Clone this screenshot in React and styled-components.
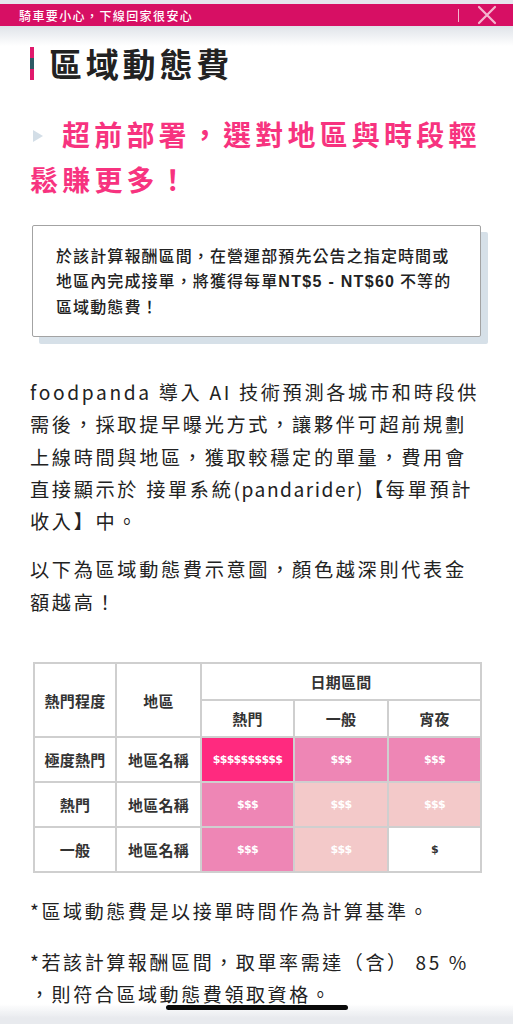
import React from 'react';
import styled, { createGlobalStyle } from 'styled-components';

const GlobalStyle = createGlobalStyle`
  html, body {
    margin: 0;
    padding: 0;
    background: #ffffff;
    overflow-x: hidden;
  }
  body {
    font-family: "Noto Sans CJK TC", "Noto Sans", sans-serif;
    color: #222222;
  }
`;

const Page = styled.div`
  width: 513px;
  padding-top: 4px;
  background: linear-gradient(#e6e6ee 0, #e6e6ee 4px, #ffffff 4px);
`;

const Banner = styled.div`
  height: 22px;
  background: #d70f64;
  display: flex;
  align-items: center;
  padding: 0 16px 0 19px;
`;

const BannerText = styled.span`
  flex: 1;
  color: #ffffff;
  font-size: 12px;
  font-weight: 500;
  letter-spacing: 1.4px;
`;

const Divider = styled.span`
  width: 1.5px;
  height: 13px;
  background: #f4b6cf;
  margin-right: 18px;
`;

const CloseButton = styled.button`
  border: 0;
  padding: 0;
  background: none;
  display: flex;
  align-items: center;
`;

const Content = styled.main`
  padding: 20px 28px 0 30px;
  background: linear-gradient(#dfe3e9, #ffffff 20px);
`;

const TitleRow = styled.h1`
  display: flex;
  align-items: center;
  margin: 0;
  font-size: 33px;
  font-weight: 700;
  letter-spacing: 3.8px;
  line-height: 34px;
  color: #222222;
`;

const TitleMark = styled.span`
  width: 4px;
  height: 33px;
  margin-right: 15px;
  background: linear-gradient(
    #e0196c 0 33%,
    #2d5964 33% 66%,
    #e0196c 66% 100%
  );
`;

const Headline = styled.h2`
  margin: 32px 0 0 0;
  font-size: 28px;
  font-weight: 700;
  letter-spacing: 4.2px;
  line-height: 45px;
  color: #f7337f;
`;

const Triangle = styled.span`
  display: inline-block;
  width: 0;
  height: 0;
  border-top: 6px solid transparent;
  border-bottom: 6px solid transparent;
  border-left: 10px solid #d3dee7;
  margin: 0 19px 0 3px;
  vertical-align: 4px;
`;

const Callout = styled.div`
  margin: 23px 4px 0 2px;
  padding: 17px 16px 17px 23px;
  border: 1.5px solid #a3a3a3;
  border-radius: 2px;
  background: #ffffff;
  box-shadow: 7px 7px 0 #d6e0e8;
  font-size: 16px;
  font-weight: 500;
  letter-spacing: 1.1px;
  line-height: 25px;
  color: #222222;
`;

const Strong = styled.b`
  font-family: "Liberation Sans", "Noto Sans", sans-serif;
  font-weight: 700;
  letter-spacing: 1.3px;
`;

const Paragraph = styled.p`
  max-width: 454px;
  margin: ${(p) => p.$top || 16}px 0 0 0;
  font-size: 19.2px;
  font-weight: 400;
  letter-spacing: 2.65px;
  line-height: 32.3px;
  color: #222222;
`;

const Latin = styled.span`
  letter-spacing: 1.5px;
`;

const Table = styled.table`
  margin: 44px 0 0 3px;
  width: 447px;
  border-collapse: collapse;
  table-layout: fixed;
  font-size: 15px;
  font-weight: 700;
  color: #333333;
  text-align: center;
`;

const Cell = styled.td`
  border: 2px solid #cfcfcf;
  padding: 0;
  height: ${(p) => p.$h || 40}px;
  background: ${(p) => p.$bg || '#ffffff'};
  color: ${(p) => (p.$bg ? '#ffffff' : '#333333')};
  font-size: ${(p) => (p.$money ? '11px' : '15px')};
  font-weight: 700;
  font-family: ${(p) =>
    p.$money ? '"DejaVu Sans", "Noto Sans", sans-serif' : 'inherit'};
  letter-spacing: ${(p) => (p.$money ? '-0.7px' : '0.2px')};
`;

const Note = styled.p`
  margin: ${(p) => p.$top}px 0 0 0;
  font-size: 19px;
  letter-spacing: 2.6px;
  line-height: 32px;
  color: #222222;
`;

const BottomFade = styled.div`
  position: fixed;
  left: 0;
  right: 0;
  bottom: 0;
  height: 20px;
  background: linear-gradient(rgba(232, 234, 238, 0), #e8eaee 70%);
  display: flex;
  justify-content: center;
`;

const HomeBar = styled.span`
  position: absolute;
  top: 1px;
  width: 182px;
  height: 5px;
  border-radius: 3px;
  background: #0a0a0a;
`;

const HOT = '#ff2a7f';
const MID = '#ee86b5';
const LIGHT = '#f3c9c9';

const rows = [
  { level: '極度熱門', cells: [[HOT, '$$$$$$$$$$'], [MID, '$$$'], [MID, '$$$']] },
  { level: '熱門', cells: [[MID, '$$$'], [LIGHT, '$$$'], [LIGHT, '$$$']] },
  { level: '一般', cells: [[MID, '$$$'], [LIGHT, '$$$'], [null, '$']] },
];

function CloseIcon() {
  return (
    <svg width="20" height="20" viewBox="0 0 20 20">
      <path
        d="M2 2 L18 18 M18 2 L2 18"
        stroke="#f4b6cf"
        strokeWidth="2.2"
        strokeLinecap="round"
      />
    </svg>
  );
}

export default function App() {
  return (
    <Page>
      <GlobalStyle />
      <Banner>
        <BannerText>騎車要小心，下線回家很安心</BannerText>
        <Divider />
        <CloseButton aria-label="close">
          <CloseIcon />
        </CloseButton>
      </Banner>
      <Content>
        <TitleRow>
          <TitleMark />
          區域動態費
        </TitleRow>
        <Headline>
          <Triangle />
          超前部署，選對地區與時段輕鬆賺更多！
        </Headline>
        <Callout>
          於該計算報酬區間，在營運部預先公告之指定時間或地區內完成接單，將獲得每單
          <Strong>NT$5 - NT$60</Strong> 不等的區域動態費！
        </Callout>
        <Paragraph $top={39}>
          foodpanda 導入 AI 技術預測各城市和時段供需後，採取提早曝光方式，讓夥伴可超前規劃上線時間與地區，獲取較穩定的單量，費用會直接顯示於 接單系統<Latin>(pandarider)</Latin>【每單預計收入】中。
        </Paragraph>
        <Paragraph>以下為區域動態費示意圖，顏色越深則代表金額越高！</Paragraph>
        <Table>
          <colgroup>
            <col style={{ width: 82 }} />
            <col style={{ width: 85 }} />
            <col style={{ width: 93 }} />
            <col style={{ width: 94 }} />
            <col style={{ width: 93 }} />
          </colgroup>
          <thead>
            <tr>
              <Cell as="th" rowSpan={2} $h={35}>熱門程度</Cell>
              <Cell as="th" rowSpan={2} $h={35}>地區</Cell>
              <Cell as="th" colSpan={3} $h={35}>日期區間</Cell>
            </tr>
            <tr>
              <Cell as="th" $h={35}>熱門</Cell>
              <Cell as="th" $h={35}>一般</Cell>
              <Cell as="th" $h={35}>宵夜</Cell>
            </tr>
          </thead>
          <tbody>
            {rows.map((row) => (
              <tr key={row.level}>
                <Cell $h={43}>{row.level}</Cell>
                <Cell $h={43}>地區名稱</Cell>
                {row.cells.map(([bg, label], i) => (
                  <Cell key={i} $h={43} $bg={bg} $money>
                    {label}
                  </Cell>
                ))}
              </tr>
            ))}
          </tbody>
        </Table>
        <Note $top={22}>*區域動態費是以接單時間作為計算基準。</Note>
        <Note $top={19}>
          *若該計算報酬區間，取單率需達（含） 85 %
          <br />
          ，則符合區域動態費領取資格。
        </Note>
      </Content>
      <BottomFade>
        <HomeBar />
      </BottomFade>
    </Page>
  );
}
